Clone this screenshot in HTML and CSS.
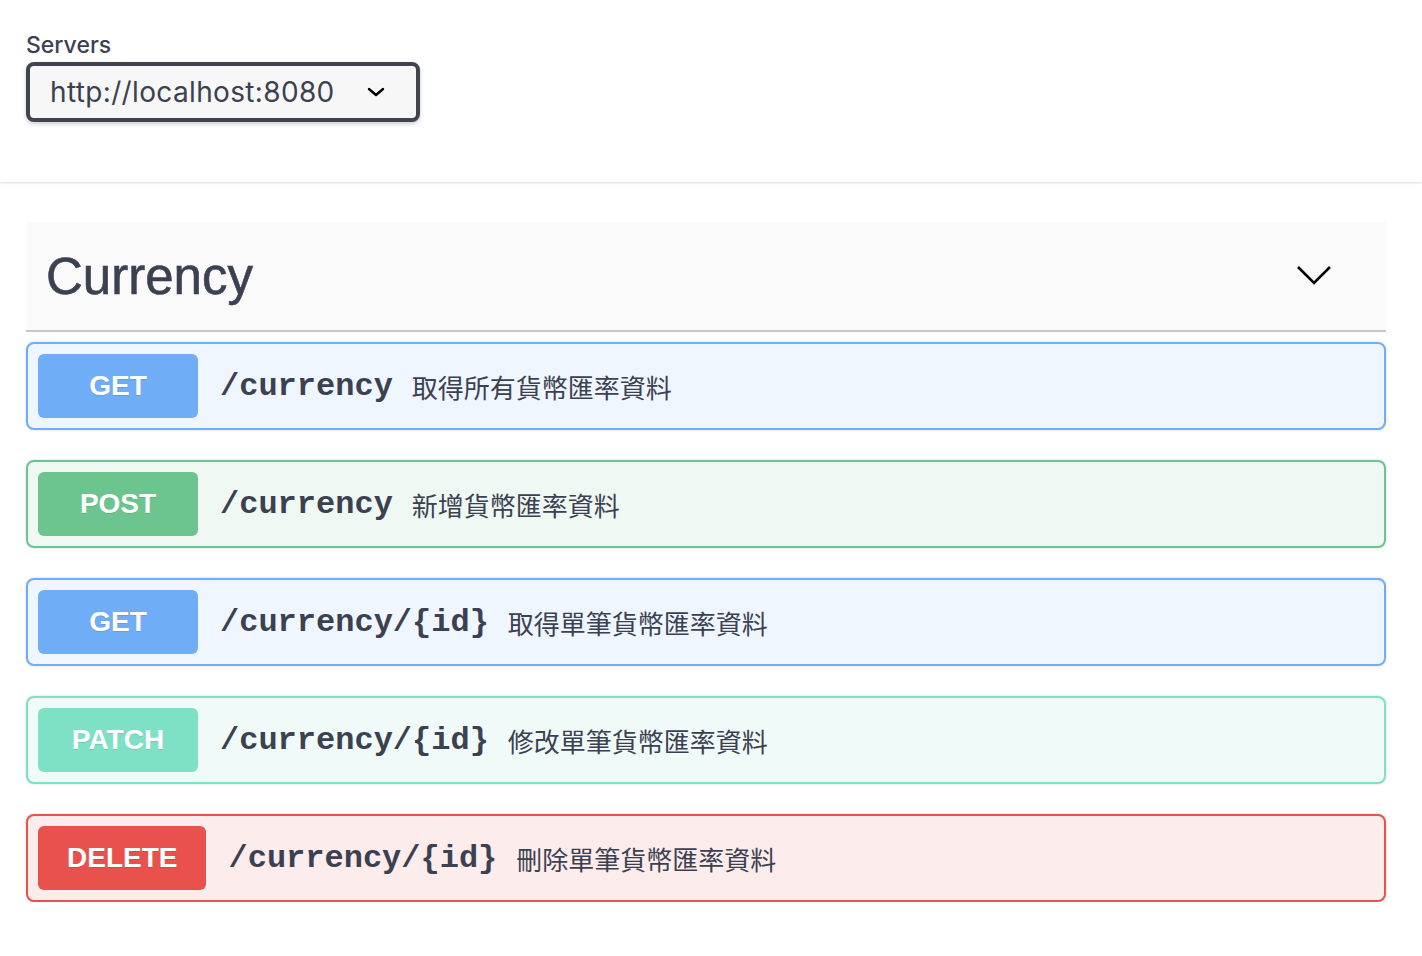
FILE: index.html
```html
<!DOCTYPE html>
<html lang="zh-Hant">
<head>
<meta charset="utf-8">
<title>Swagger UI</title>
<link rel="stylesheet" href="styles.css">
</head>
<body>
<section class="scheme">
  <span class="servers-title">Servers</span>
  <div class="select">
    <span class="select-value">http://localhost:8080</span>
    <svg class="select-arrow" width="20" height="12" viewBox="0 0 20 12"><polyline points="3,3 10,9 17,3" fill="none" stroke="#000" stroke-width="2.4" stroke-linecap="round" stroke-linejoin="round"/></svg>
  </div>
</section>

<section class="tag-section">
  <div class="tag-header">
    <h3 class="tag-title">Currency</h3>
    <svg class="tag-arrow" width="40" height="40" viewBox="0 0 40 40"><polyline points="4,11 20,27 36,11" fill="none" stroke="#000" stroke-width="2.6"/></svg>
  </div>

  <div class="opblock get">
    <span class="method">GET</span>
    <span class="path">/currency</span>
    <span class="desc">取得所有貨幣匯率資料</span>
  </div>
  <div class="opblock post">
    <span class="method">POST</span>
    <span class="path">/currency</span>
    <span class="desc">新增貨幣匯率資料</span>
  </div>
  <div class="opblock get">
    <span class="method">GET</span>
    <span class="path">/currency/{id}</span>
    <span class="desc">取得單筆貨幣匯率資料</span>
  </div>
  <div class="opblock patch">
    <span class="method">PATCH</span>
    <span class="path">/currency/{id}</span>
    <span class="desc">修改單筆貨幣匯率資料</span>
  </div>
  <div class="opblock delete">
    <span class="method">DELETE</span>
    <span class="path">/currency/{id}</span>
    <span class="desc">刪除單筆貨幣匯率資料</span>
  </div>
</section>
</body>
</html>
```

FILE: styles.css
```css
html, body {
  margin: 0;
  padding: 0;
  background: #fff;
  font-family: "Liberation Sans", Arial, sans-serif;
  color: #3b4151;
}

.scheme {
  height: 182px;
  box-sizing: border-box;
  padding: 31px 26px 0;
  box-shadow: 0 1px 2px 0 rgba(0, 0, 0, 0.15);
  display: flex;
  flex-direction: column;
  align-items: flex-start;
}

.servers-title {
  font-family: Inter, "Liberation Sans", sans-serif;
  font-weight: 500;
  font-size: 23px;
  line-height: 29px;
  color: #3b4151;
  margin-bottom: 2px;
}

.select {
  width: 394px;
  height: 60px;
  box-sizing: border-box;
  border: 4px solid #41444e;
  border-radius: 8px;
  background: #f7f7f7;
  box-shadow: 0 2px 4px rgba(0, 0, 0, 0.2);
  display: flex;
  align-items: center;
  padding: 0 30px 0 20px;
  justify-content: space-between;
}

.select-value {
  font-family: Inter, "Liberation Sans", sans-serif;
  font-size: 28px;
  letter-spacing: 0.35px;
  color: #3b4151;
}

.tag-section {
  width: 1360px;
  margin: 40px 0 0 26px;
}

.tag-header {
  height: 108px;
  background: #fafafa;
  border-bottom: 2px solid #c5c6cb;
  display: flex;
  align-items: center;
  justify-content: space-between;
  padding: 0 52px 0 20px;
}

.tag-title {
  margin: 0;
  font-size: 51px;
  font-weight: normal;
  color: #3b4151;
  line-height: 1;
  -webkit-text-stroke: 0.6px #3b4151;
}

.opblock {
  display: flex;
  align-items: center;
  height: 88px;
  box-sizing: border-box;
  border: 2px solid;
  border-radius: 8px;
  padding: 0 10px;
  margin-top: 30px;
  box-shadow: 0 0 3px rgba(0, 0, 0, 0.15);
}

.tag-header + .opblock {
  margin-top: 10px;
}

.method {
  min-width: 160px;
  height: 64px;
  box-sizing: border-box;
  padding: 0 29px;
  border-radius: 6px;
  display: flex;
  align-items: center;
  justify-content: center;
  color: #fff;
  font-weight: bold;
  font-size: 28px;
  text-shadow: 0 1px 0 rgba(0, 0, 0, 0.1);
}

.path {
  margin-left: 22px;
  font-family: "Liberation Mono", "Courier New", monospace;
  font-weight: bold;
  font-size: 32px;
  color: #3b4151;
}

.desc {
  margin-left: 19px;
  font-family: "Noto Sans CJK TC", "Noto Sans", sans-serif;
  font-size: 26px;
  color: #3b4151;
}

.get { border-color: #6eaef8; background: #eff6ff; }
.get .method { background: #6fadf7; }

.post { border-color: #6cc58f; background: #eff8f3; }
.post .method { background: #6cc58f; }

.patch { border-color: #7ee0c5; background: #f0faf8; }
.patch .method { background: #7ee0c5; }

.delete { border-color: #e9514d; background: #fcecec; }
.delete .method { background: #e9514d; }
```
